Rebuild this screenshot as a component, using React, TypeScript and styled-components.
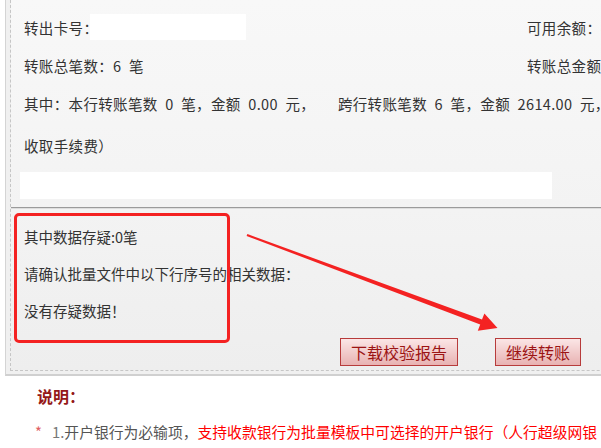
import styled, { createGlobalStyle } from "styled-components";

const GlobalStyle = createGlobalStyle`
  html, body {
    margin: 0;
    padding: 0;
    background: #fff;
    overflow: hidden;
  }
  body {
    font-family: "Noto Sans CJK SC", "Noto Sans", sans-serif;
    color: #333;
  }
`;

const Page = styled.div`
  width: 720px;
  padding-left: 5px;
`;

const Frame = styled.div`
  border-left: 1px solid #d4d4d4;
  border-bottom: 2px solid #d0d0d0;
  background: #f0f0f0;
  padding: 0 0 3px 4px;
`;

const Inner = styled.div`
  border-left: 1px dashed #c6c6c6;
  border-bottom: 1px dashed #c6c6c6;
`;

const Summary = styled.div`
  padding: 8px 0 8px 9px;
  background: linear-gradient(#f8f8f8, #f3f3f3);
  border-bottom: 1px solid #9b9b9b;
  font-size: 14.5px;
  word-spacing: 4px;
  letter-spacing: 0.35px;
`;

const Row = styled.div<{ $gap?: number }>`
  height: 38px;
  margin-top: ${(p) => p.$gap || 0}px;
  padding-left: 4px;
  display: grid;
  grid-template-columns: 503px auto;
  align-items: center;
  white-space: nowrap;
`;

const Cell = styled.div`
  display: flex;
  align-items: center;
`;

const Label = styled.span`
  width: 66px;
  white-space: nowrap;
`;

const Mask = styled.div<{ $w: number; $h: number }>`
  width: ${(p) => p.$w}px;
  height: ${(p) => p.$h}px;
  background: #fff;
  flex: none;
`;

const MaskBar = styled(Mask)`
  margin-top: 8px;
`;

const Review = styled.div`
  position: relative;
  border-top: 1px solid #dedede;
  background: linear-gradient(#f3f3f3, #eeeeee);
  padding: 9px 0 4px 13px;
  font-size: 14.5px;
`;

const Line = styled.div`
  height: 37px;
  display: flex;
  align-items: center;
`;

const Actions = styled.div`
  display: flex;
  gap: 37px;
  margin-top: 9px;
  padding-left: 316px;
`;

const ActionButton = styled.button`
  height: 28px;
  padding: 0 10px;
  border: 1px solid #b73b3b;
  background: linear-gradient(#fbe6e6, #e8b2b2);
  color: #9c1414;
  font: 16px "Noto Sans CJK SC", sans-serif;
  line-height: 26px;
  cursor: pointer;
`;

const Highlight = styled.div`
  position: absolute;
  left: 3px;
  top: 4px;
  width: 216px;
  height: 130px;
  box-sizing: border-box;
  border: 3px solid #f42222;
  border-radius: 5px;
  pointer-events: none;
`;

const Arrow = styled.svg`
  position: absolute;
  left: 0;
  top: 0;
  pointer-events: none;
`;

const Notes = styled.div`
  padding: 10px 0 0 30px;
`;

const NoteTitle = styled.div`
  padding-left: 2px;
  height: 20px;
  line-height: 20px;
  font-size: 16px;
  font-weight: 700;
  color: #941818;
`;

const NoteItem = styled.div`
  margin-top: 16px;
  height: 20px;
  line-height: 20px;
  font-size: 14.8px;
  color: #555;
  white-space: nowrap;
`;

const Star = styled.span`
  display: inline-block;
  width: 17px;
  color: #e06060;
`;

const Num = styled.span`
  color: #777;
`;

const Red = styled.span`
  color: #ff0000;
`;

export default function App() {
  return (
    <>
      <GlobalStyle />
      <Page>
        <Frame>
          <Inner>
            <Summary>
              <Row>
                <Cell>
                  <Label>转出卡号：</Label>
                  <Mask $w={156} $h={26} />
                </Cell>
                <span>可用余额：4</span>
              </Row>
              <Row>
                <span>转账总笔数：6 笔</span>
                <span>转账总金额</span>
              </Row>
              <Row>
                <span>
                  其中：本行转账笔数 0 笔，金额 0.00 元，&nbsp;&nbsp;&nbsp;跨行转账笔数 6 笔，金额 2614.00 元，
                </span>
              </Row>
              <Row $gap={4}>
                <span>收取手续费）</span>
              </Row>
              <MaskBar $w={532} $h={27} />
            </Summary>

            <Review>
              <Line>其中数据存疑:0笔</Line>
              <Line>请确认批量文件中以下行序号的相关数据：</Line>
              <Line>没有存疑数据！</Line>
              <Actions>
                <ActionButton>下载校验报告</ActionButton>
                <ActionButton>继续转账</ActionButton>
              </Actions>

              {/* annotation overlay */}
              <Highlight />
              <Arrow width="600" height="170" viewBox="0 0 600 170">
                <g transform="translate(-11 -209)">
                  <polygon
                    fill="#f42222"
                    points="247.4,234.1 482,319.6 484.4,313.5 497.5,328 477.8,330.7 480.2,324.6 246.6,235.9"
                  />
                </g>
              </Arrow>
            </Review>
          </Inner>
        </Frame>

        <Notes>
          <NoteTitle>说明：</NoteTitle>
          <NoteItem>
            <Star>*</Star>
            <Num>1.</Num>
            开户银行为必输项，
            <Red>支持收款银行为批量模板中可选择的开户银行（人行超级网银</Red>
          </NoteItem>
        </Notes>
      </Page>
    </>
  );
}
